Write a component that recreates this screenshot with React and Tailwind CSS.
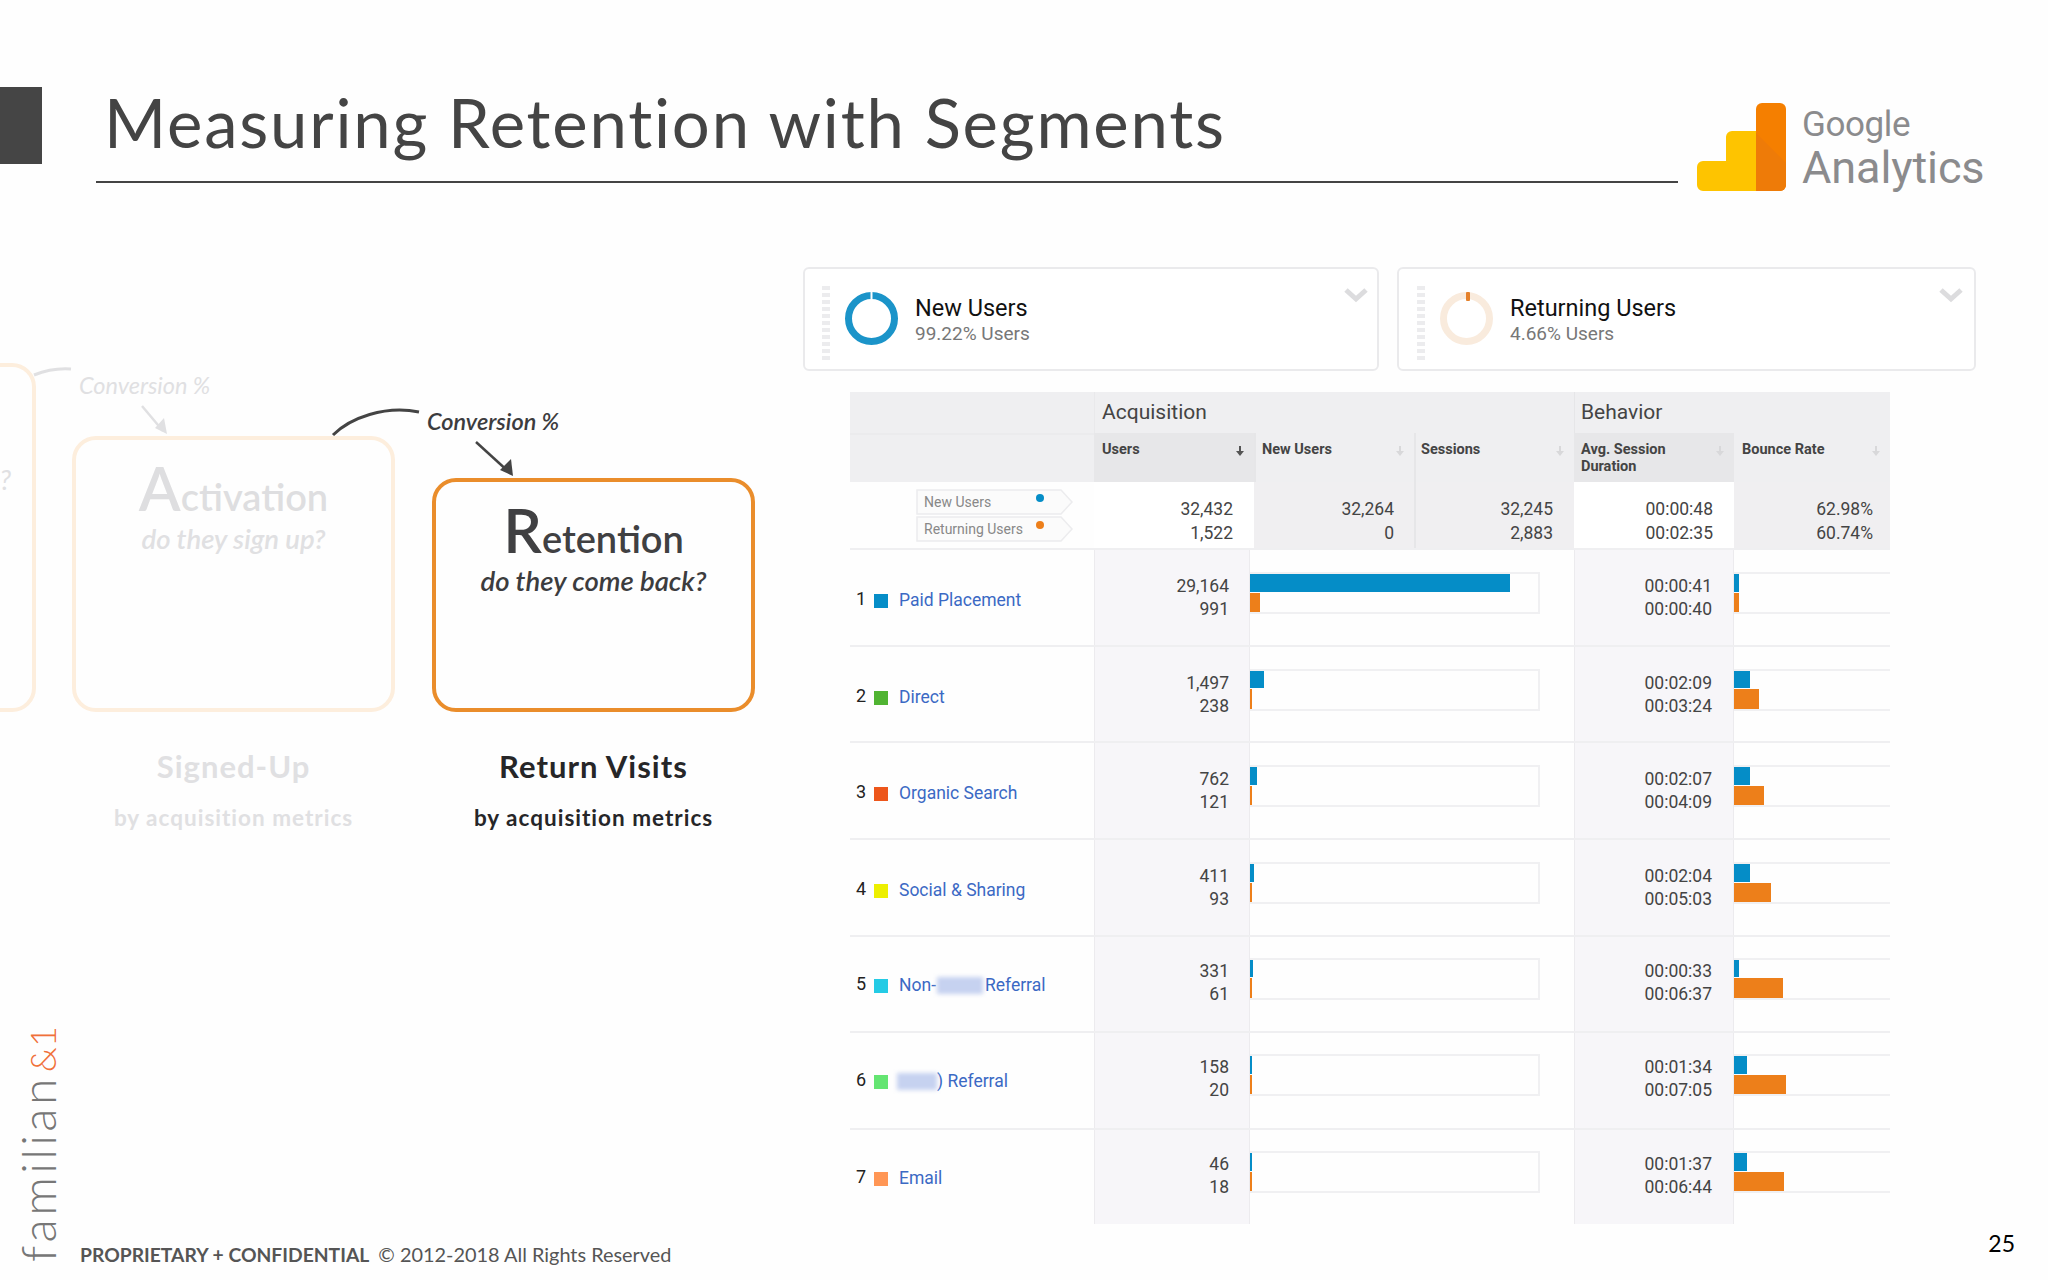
import React from "react";

const rows = [
  { n: 1, color: "bg-[#058dc7]", label: "Paid Placement", users: ["29,164", "991"], time: ["00:00:41", "00:00:40"], bars: [260, 10], bounce: [5, 5] },
  { n: 2, color: "bg-[#50b432]", label: "Direct", users: ["1,497", "238"], time: ["00:02:09", "00:03:24"], bars: [14, 2], bounce: [16, 25] },
  { n: 3, color: "bg-[#ed561b]", label: "Organic Search", users: ["762", "121"], time: ["00:02:07", "00:04:09"], bars: [7, 2], bounce: [16, 30] },
  { n: 4, color: "bg-[#edef00]", label: "Social & Sharing", users: ["411", "93"], time: ["00:02:04", "00:05:03"], bars: [4, 2], bounce: [16, 37] },
  { n: 5, color: "bg-[#24cbe5]", users: ["331", "61"], time: ["00:00:33", "00:06:37"], bars: [3, 2], bounce: [5, 49] },
  { n: 6, color: "bg-[#64e572]", users: ["158", "20"], time: ["00:01:34", "00:07:05"], bars: [2, 2], bounce: [13, 52] },
  { n: 7, color: "bg-[#ff9655]", label: "Email", users: ["46", "18"], time: ["00:01:37", "00:06:44"], bars: [2, 2], bounce: [13, 50] },
];

const Blur = ({ className }) => (
  <span className={`inline-block h-[17px] bg-[#c6d2f0] blur-[2px] align-[-3px] ${className}`} />
);

const Label = ({ row }) => {
  if (row.n === 5) {
    return (
      <>
        Non-
        <Blur className="w-[46px] ml-[1px] mr-[2px]" />
        Referral
      </>
    );
  }
  if (row.n === 6) {
    return (
      <span className="-ml-[2px]">
        <Blur className="w-[40px]" />) Referral
      </span>
    );
  }
  return row.label;
};

const Donut = ({ track, value, className }) => (
  <svg viewBox="0 0 53 53" className={className}>
    <circle cx="26.5" cy="26.5" r="23" fill="none" stroke={track} strokeWidth="7" />
    {value && <rect x="26" y="0" width="4" height="9" rx="1" fill={value} />}
    {!value && <rect x="25.5" y="0" width="2" height="8" fill="#fefefe" />}
  </svg>
);

const Chevron = () => (
  <svg viewBox="0 0 24 16" className="w-[24px] h-[16px] mt-[18px]">
    <path d="M2 3l10 9 10-9" fill="none" stroke="#dcdcde" strokeWidth="5" />
  </svg>
);

const SegmentCard = ({ title, sub, donut, className }) => (
  <div className={`h-[104px] flex items-start border-2 border-[#eaeaec] rounded-[6px] bg-white ${className}`}>
    <div className="ml-[17px] mt-[17px] w-[8px] flex flex-col gap-[3px]">
      {Array.from({ length: 11 }).map((_, i) => (
        <span key={i} className="h-[4px] bg-[#ececee]" />
      ))}
    </div>
    <div className="ml-[15px] mt-[23px]">{donut}</div>
    <div className="ml-[17px] mt-[25px] flex-1">
      <div className="text-[23.5px] leading-[28px] text-[#111]">{title}</div>
      <div className="text-[19px] leading-[24px] text-[#777]">{sub}</div>
    </div>
    <Chevron />
  </div>
);

const SortArrow = ({ dark }) => (
  <svg viewBox="0 0 8 10" className="w-[8px] h-[10px] mt-[5px]">
    <path d="M3 0h2v5h3l-4 5-4-5h3z" fill={dark ? "#555" : "#d8d8da"} />
  </svg>
);

const HeadCell = ({ title, dark, className }) => (
  <div className={`flex justify-between items-start pr-[10px] pt-[8px] h-full text-[14.5px] leading-[17px] font-bold text-[#444] ${className}`}>
    <span className="whitespace-pre-line">{title}</span>
    <SortArrow dark={dark} />
  </div>
);

const TotalCell = ({ lines, className }) => (
  <div className={`h-full text-right text-[17.5px] leading-[24px] text-[#444] pt-[15px] ${className}`}>
    <div>{lines[0]}</div>
    <div>{lines[1]}</div>
  </div>
);

const LegendTag = ({ label, dot }) => (
  <div className="relative w-[158px] h-[26px]">
    <svg viewBox="0 0 158 26" className="absolute inset-0 w-full h-full">
      <path d="M1 1h144l11 12-11 12H1z" fill="#fbfbfb" stroke="#ececee" strokeWidth="1.5" />
    </svg>
    <span className="absolute left-[8px] top-[3px] text-[14px] leading-[20px] text-[#888]">{label}</span>
    <span className={`absolute left-[120px] top-[5px] w-[8px] h-[8px] rounded-full ${dot}`} />
  </div>
);

const BarTrack = ({ values, className }) => (
  <div className={`flex flex-col gap-[1px] h-[42px] border-y-2 border-[#f0f0f2] ${className}`}>
    <div className="h-[18px] bg-[#058dc7]" style={{ width: values[0] }} />
    <div className="h-[20px] bg-[#ed7f1a]" style={{ width: values[1] }} />
  </div>
);

const DataRow = ({ row }) => (
  <div className={`grid grid-cols-[244px_156px_324px_160px_156px] ${row.n === 7 ? "h-[94px]" : "h-[96.7px] border-b-2 border-[#efeff1]"}`}>
    <div className={`flex items-start pl-[6px] ${row.n < 5 ? "pt-[36px]" : "pt-[34px]"}`}>
      <span className="w-[18px] text-[18px] leading-[26px] text-[#222]">{row.n}</span>
      <span className={`w-[14px] h-[14px] mt-[8px] ${row.color}`} />
      <span className="ml-[11px] text-[17.5px] leading-[28px] text-[#3b69c4] whitespace-nowrap">
        <Label row={row} />
      </span>
    </div>
    <div className={`bg-[#f7f6f9] border-x border-[#ecebee] text-right pr-[20px] text-[17.5px] leading-[23px] text-[#444] ${row.n < 5 ? "pt-[25px]" : "pt-[23px]"}`}>
      <div>{row.users[0]}</div>
      <div>{row.users[1]}</div>
    </div>
    <div className={row.n < 5 ? "pt-[22px]" : "pt-[21px]"}>
      <BarTrack values={row.bars} className="w-[290px] border-r-2" />
    </div>
    <div className={`bg-[#f7f6f9] border-x border-[#ecebee] text-right pr-[21px] text-[17.5px] leading-[23px] text-[#444] ${row.n < 5 ? "pt-[25px]" : "pt-[23px]"}`}>
      <div>{row.time[0]}</div>
      <div>{row.time[1]}</div>
    </div>
    <div className={row.n < 5 ? "pt-[22px]" : "pt-[21px]"}>
      <BarTrack values={row.bounce} />
    </div>
  </div>
);

const ReportTable = () => (
  <div className="ml-[47px] mt-[21px] w-[1040px] [font-family:Roboto,sans-serif]">
    <div className="grid grid-cols-[244px_480px_316px] h-[41px] bg-[#efeff1] text-[21px] leading-[41px] text-[#444]">
      <div />
      <div className="pl-[7px] border-l border-[#e9e9eb]">Acquisition</div>
      <div className="pl-[6px] border-l border-[#e6e6e8]">Behavior</div>
    </div>
    <div className="grid grid-cols-[244px_160px_160px_160px_160px_156px] h-[49px] bg-[#efeff1]">
      <div className="border-t-2 border-[#ebebed]" />
      <HeadCell title="Users" dark className="pl-[8px] bg-[#e7e7e9]" />
      <HeadCell title="New Users" className="pl-[6px] border-l-2 border-[#e6e6e8]" />
      <HeadCell title="Sessions" className="pl-[5px] border-l-2 border-[#e6e6e8]" />
      <HeadCell title={"Avg. Session\nDuration"} className="pl-[7px] bg-[#e7e7e9]" />
      <HeadCell title="Bounce Rate" className="pl-[8px] pr-[6px]" />
    </div>
    <div className="grid grid-cols-[244px_160px_160px_160px_160px_156px] h-[68px] border-b-2 border-[#efeff1]">
      <div className="pl-[66px] pt-[7px] flex flex-col gap-[1px]">
        <LegendTag label="New Users" dot="bg-[#058dc7]" />
        <LegendTag label="Returning Users" dot="bg-[#ed7f1a]" />
      </div>
      <TotalCell lines={["32,432", "1,522"]} className="bg-white pr-[21px]" />
      <TotalCell lines={["32,264", "0"]} className="bg-[#f0eff1] pr-[20px]" />
      <TotalCell lines={["32,245", "2,883"]} className="bg-[#f0eff1] border-l-2 border-[#e6e6e8] pr-[21px]" />
      <TotalCell lines={["00:00:48", "00:02:35"]} className="bg-white pr-[21px]" />
      <TotalCell lines={["62.98%", "60.74%"]} className="bg-[#f0eff1] pr-[17px]" />
    </div>
    {rows.map((row) => (
      <DataRow key={row.n} row={row} />
    ))}
  </div>
);

const Stage = ({ box, boxClass, title, caption, faded, className }) => (
  <div className={`shrink-0 text-center ${className}`}>
    <div className={`border-[4px] rounded-[24px] flex flex-col items-center ${boxClass}`}>
      {box}
    </div>
    <div className={`mt-[36px] text-[31px] leading-[36px] font-bold tracking-[1px] whitespace-nowrap ${faded ? "text-[#e0e0e2]" : "text-[#262628]"}`}>
      {title}
    </div>
    <div className={`mt-[20px] text-[22.5px] leading-[28px] font-bold tracking-[1px] whitespace-nowrap ${faded ? "text-[#e0e0e2]" : "text-[#262628]"}`}>
      {caption}
    </div>
  </div>
);

const Funnel = () => (
  <div className="relative w-[803px] h-[1024px]">
    <div className="flex items-start gap-[36px] -ml-[287px]">
      <Stage
        faded
        className="w-[323px] mt-[163px]"
        boxClass="h-[349px] border-[#fdeedd] items-end pr-[21px] pt-[98px]"
        box={<span className="text-[27px] leading-[30px] italic text-[#e0e0e2]">?</span>}
      />
      <Stage
        faded
        title="Signed-Up"
        caption="by acquisition metrics"
        className="w-[323px] mt-[236px]"
        boxClass="h-[276px] border-[#fdeedd] pt-[17px]"
        box={
          <>
            <div className="text-[38px] leading-[61px] font-semibold text-[#dedee0]">
              <span className="text-[61px]">A</span>ctivation
            </div>
            <div className="-mt-[3px] text-[27.5px] leading-[30px] italic font-semibold text-[#e0e0e2]">do they sign up?</div>
          </>
        }
      />
      <Stage
        title="Return Visits"
        caption="by acquisition metrics"
        className="w-[323px] mt-[278px] ml-[1px]"
        boxClass="h-[234px] border-[#ea8d2b] pt-[17px]"
        box={
          <>
            <div className="text-[38px] leading-[61px] font-semibold text-[#404042]">
              <span className="text-[61px]">R</span>etention
            </div>
            <div className="-mt-[3px] text-[27.5px] leading-[30px] italic font-semibold text-[#3c3c3e]">do they come back?</div>
          </>
        }
      />
    </div>
    <span className="absolute left-[79px] top-[172px] text-[23.5px] leading-[26px] italic text-[#e0e0e2]">Conversion %</span>
    <span className="absolute left-[427px] top-[208px] text-[23.5px] leading-[26px] italic font-semibold text-[#3c3c3e]">Conversion %</span>
    <svg viewBox="0 0 803 1024" className="absolute inset-0 w-full h-full pointer-events-none">
      <path d="M34 175C44 171 58 168 71 169" fill="none" stroke="#e0e0e2" strokeWidth="3" />
      <path d="M142 206L163 231" fill="none" stroke="#e0e0e2" strokeWidth="2.5" />
      <path d="M167 234l-12-6 9-10z" fill="#e0e0e2" />
      <path d="M333 235C350 218 385 205 419 212" fill="none" stroke="#444" strokeWidth="3" />
      <path d="M476 242L510 273" fill="none" stroke="#444" strokeWidth="2.5" />
      <path d="M513 276l-13-6 11-11z" fill="#444" />
    </svg>
  </div>
);

const Logo = () => (
  <div className="flex items-start mt-[103px] ml-[19px]">
    <svg viewBox="0 0 89 88" className="w-[89px] h-[88px]">
      <path d="M6 58h23V34a6 6 0 0 1 6-6h24v60H6a6 6 0 0 1-6-6V64a6 6 0 0 1 6-6z" fill="#fec400" />
      <path d="M59 6a6 6 0 0 1 6-6h18a6 6 0 0 1 6 6v76a6 6 0 0 1-6 6H59z" fill="#f57f00" />
      <path d="M59 30l30 30v22a6 6 0 0 1-6 6H59z" fill="#ee7b08" />
    </svg>
    <div className="ml-[16px] [font-family:Roboto,sans-serif] text-[#8b8b8d]">
      <div className="text-[35px] leading-[40px] mt-[2px] tracking-[-0.4px]">Google</div>
      <div className="text-[45px] leading-[50px] -mt-[2px] tracking-[-0.1px]">Analytics</div>
    </div>
  </div>
);

export default function App() {
  return (
    <div className="relative w-[2048px] h-[1280px] overflow-hidden bg-[#fefefe] [font-family:Lato,sans-serif]">
      <header className="flex items-start h-[200px]">
        <div className="w-[42px] h-[77px] mt-[87px] bg-[#454545]" />
        <div className="w-[1582px] h-[183px] ml-[54px] pl-[8px] pt-[82px] border-b-2 border-[#444]">
          <h1 className="text-[67px] leading-[80px] tracking-[1.8px] text-[#444] whitespace-nowrap">Measuring Retention with Segments</h1>
        </div>
        <Logo />
      </header>

      <main className="flex items-start h-[1024px]">
        <Funnel />
        <div className="w-[1245px]">
          <div className="flex gap-[18px] mt-[67px] [font-family:Roboto,sans-serif]">
            <SegmentCard
              className="w-[576px] pr-[9px]"
              title="New Users"
              sub="99.22% Users"
              donut={<Donut track="#1b94c9" className="w-[53px] h-[53px]" />}
            />
            <SegmentCard
              className="w-[579px] pl-[1px] pr-[11px]"
              title="Returning Users"
              sub="4.66% Users"
              donut={<Donut track="#f9ebdd" value="#e5812b" className="w-[53px] h-[53px]" />}
            />
          </div>
          <ReportTable />
        </div>
      </main>

      <footer className="flex justify-between items-start h-[56px] pl-[80px] pr-[33px]">
        <p className="mt-[18px] text-[19.9px] leading-[24px] text-[#555] whitespace-nowrap">
          <span className="text-[19.3px] font-bold mr-[9px]">PROPRIETARY + CONFIDENTIAL</span>© 2012-2018 All Rights Reserved
        </p>
        <span className="mt-[5px] text-[23px] leading-[28px] text-black">25</span>
      </footer>

      <div className="absolute left-[14px] top-[1262px] origin-top-left -rotate-90 whitespace-nowrap text-[48px] leading-[48px] font-light tracking-[3.4px] text-[#777]">
        familian<span className="ml-[3px] text-[36px] tracking-normal text-[#f0703a]">&amp;1</span>
      </div>
    </div>
  );
}
